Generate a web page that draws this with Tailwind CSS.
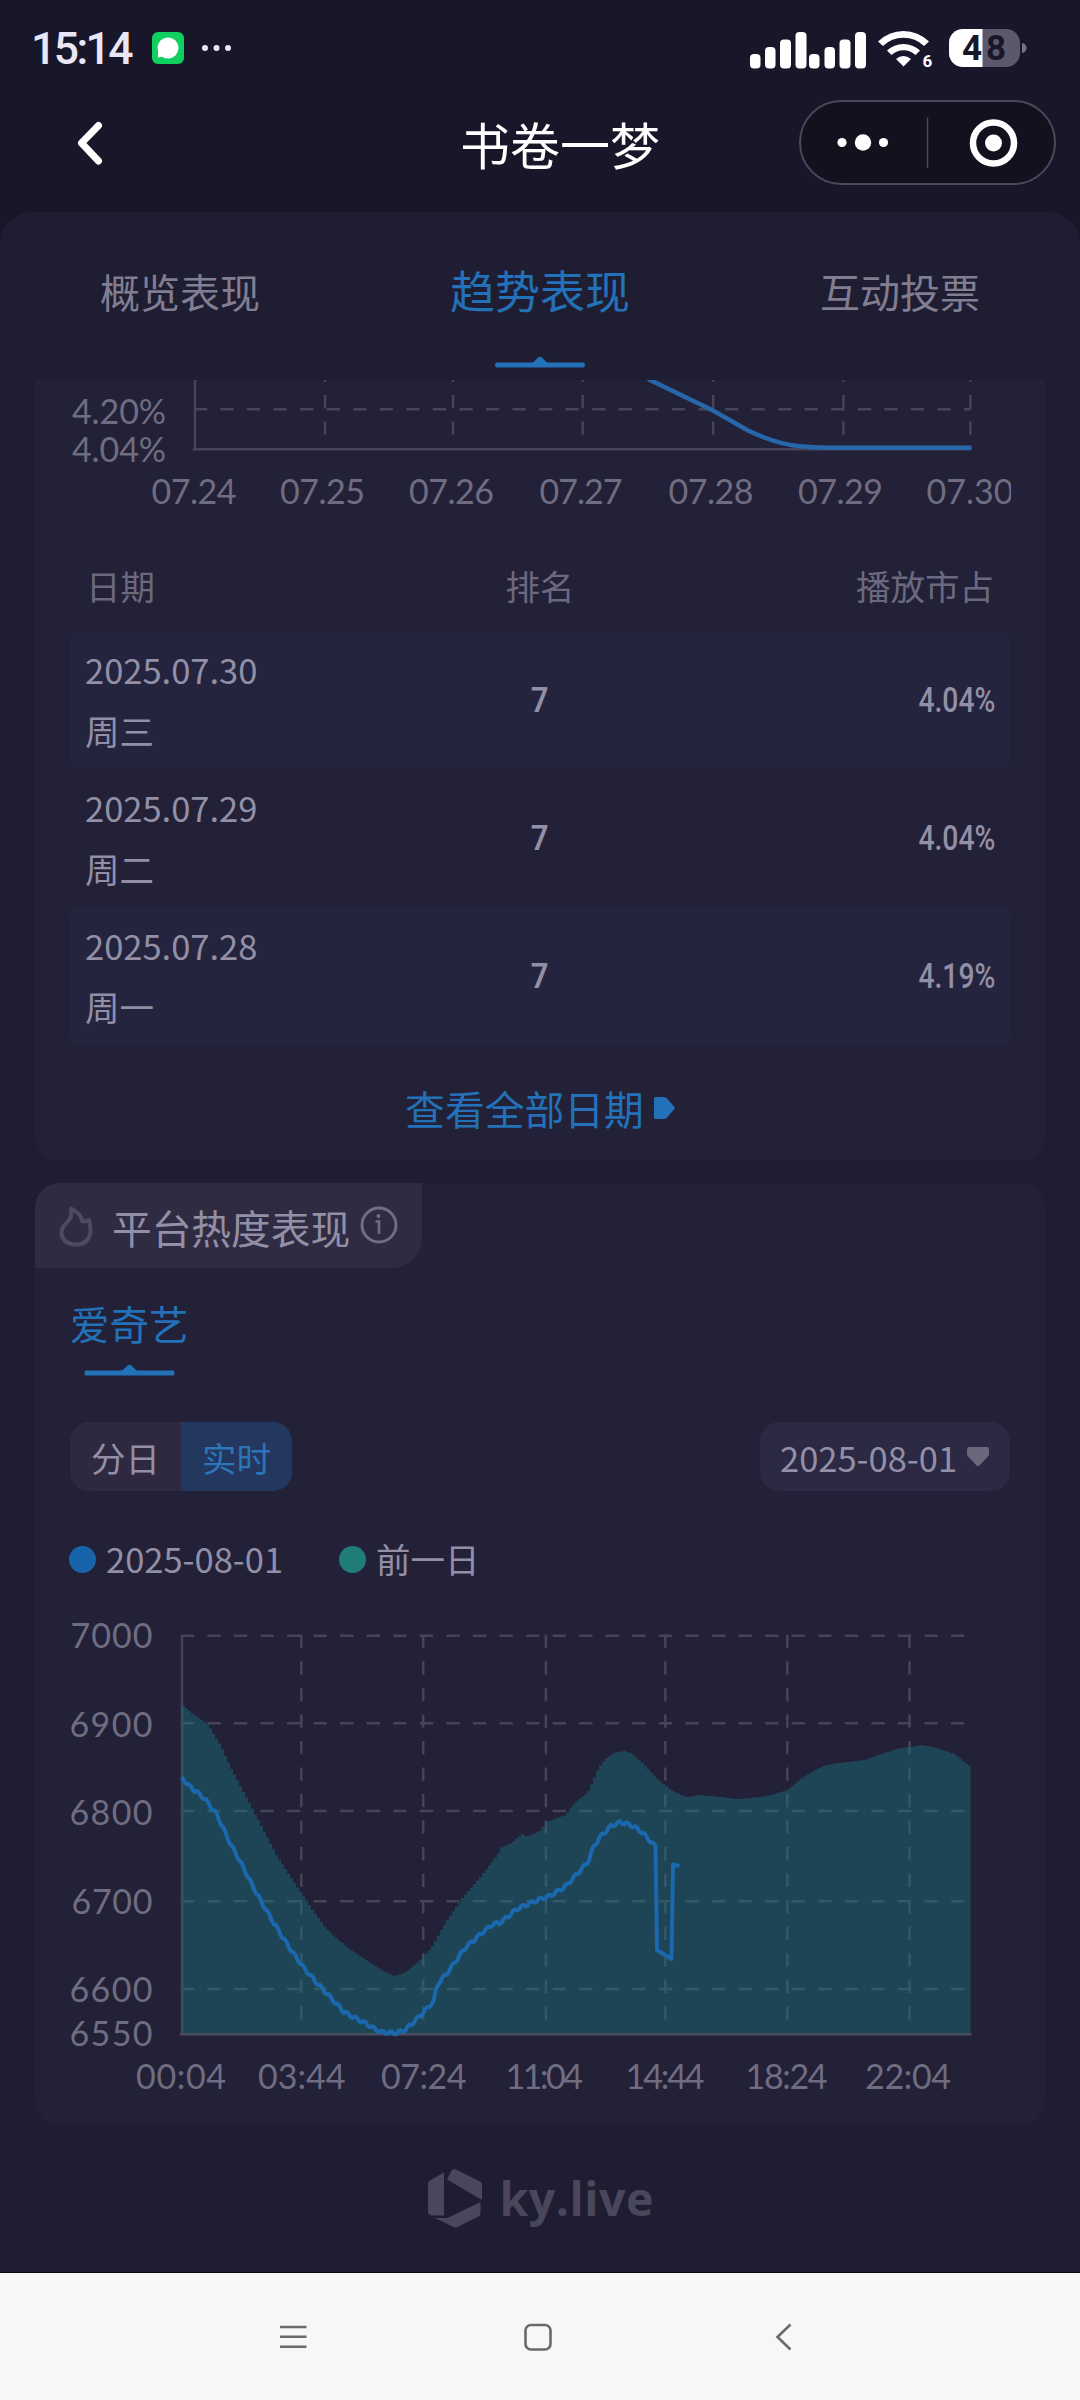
<!DOCTYPE html>
<html lang="zh-CN">

<head>
    <meta charset="UTF-8">
    <meta name="viewport" content="width=device-width, initial-scale=1.0">
    <title>书卷一梦</title>
    <script src="https://cdn.jsdelivr.net/npm/@tailwindcss/browser@4"></script>
</head>

<body class="w-[1080px] h-[2400px] overflow-hidden bg-[#181629] font-['Noto_Sans_CJK_SC',sans-serif] text-[#928fa6]">

    <!-- Status bar -->
    <div class="h-24 pl-[31px] pr-[52px] flex items-center text-[#e9e7f6]">
        <span class="w-[121px] font-['Roboto',sans-serif] font-medium text-[44.500px] leading-none tracking-[-2.6px] mt-0.5">15:14</span>
        <svg class="w-8 h-8" viewBox="0 0 32 32">
            <rect width="32" height="32" rx="6" fill="#10cf5e" />
            <circle cx="16" cy="16" r="10.5" fill="#fff" />
            <path d="M6 17v8.5l7-1z" fill="#fff" />
        </svg>
        <svg class="w-8 h-8 ml-[17px]" viewBox="0 0 32 32" fill="#e9e7f6">
            <circle cx="4" cy="16" r="3" />
            <circle cx="15.500" cy="16" r="3" />
            <circle cx="27" cy="16" r="3" />
        </svg>
        <!-- Signal, wifi, battery -->
        <svg class="w-[280px] h-12 ml-auto" viewBox="748 24 280 48" fill="#fff">
            <rect x="750" y="54" width="10.500" height="14.500" rx="4" />
            <rect x="765" y="47" width="10.500" height="21.500" rx="4" />
            <rect x="780" y="39.500" width="11" height="29" rx="4" />
            <rect x="795.500" y="32" width="11" height="36.500" rx="4" />
            <rect x="809" y="54" width="10.500" height="14.500" rx="4" />
            <rect x="824.500" y="47" width="10.500" height="21.500" rx="4" />
            <rect x="839.500" y="39.500" width="11" height="29" rx="4" />
            <rect x="855" y="32" width="11" height="36.500" rx="4" />
            <path d="M878 41.500a36 36 0 0 1 51 0l-5 4.500a29.500 29.500 0 0 0-41 0z" />
            <path d="M887 50.500a24 24 0 0 1 33 0l-4.500 4.500a17.500 17.500 0 0 0-24 0z" />
            <path d="M896 59q7.500-6 15 0l-7.500 7.500z" />
            <text x="922.500" y="66.500" font-size="17" font-weight="700" font-family="Roboto">6</text>
            <rect x="949" y="29" width="71" height="38" rx="14" fill="#5b586c" />
            <path d="M982.500 29v38H963a14 14 0 0 1-14-14V43a14 14 0 0 1 14-14z" />
            <path d="M1022 43q4.500 1 4.500 5t-4.500 5z" fill="#777488" />
            <text x="962" y="60" font-size="35" font-weight="700" font-family="Roboto" fill="#181629" textLength="44">48</text>
        </svg>
    </div>

    <!-- Title bar -->
    <div class="h-[116px] pl-[72px] pr-6 flex items-start text-white">
        <svg class="w-9 h-[94px]" viewBox="0 0 36 94" fill="none" stroke="#fff" stroke-width="7" stroke-linecap="round" stroke-linejoin="round">
            <path d="M26.500 29.500 9.500 47 26.500 65" />
        </svg>
        <h1 class="ml-[352px] mt-1 text-[50px] leading-[86px]">书卷一梦</h1>
        <div class="ml-auto mt-1 w-[257px] h-[85px] rounded-full border-2 border-[#4a485a] bg-[#12111e] flex items-center">
            <svg class="w-full h-[81px]" viewBox="801 102 253 81" fill="#fff">
                <circle cx="842" cy="142.500" r="4.600" />
                <circle cx="863" cy="142.500" r="8.200" />
                <circle cx="883.500" cy="142.500" r="4.600" />
                <path d="M927.500 117.500v50.500" stroke="#4a485a" stroke-width="1.500" />
                <circle cx="993.500" cy="143" r="20.500" fill="none" stroke="#fff" stroke-width="6.500" />
                <circle cx="993.500" cy="143" r="8.500" />
            </svg>
        </div>
    </div>

    <main class="h-[2061px] rounded-t-[32px] bg-[#1f1d31] border-b border-[#08070f] overflow-hidden">

        <!-- Tabs -->
        <nav class="h-[168px] grid grid-cols-3 text-center text-[40px] text-[#827e92]">
            <div class="pt-10 leading-[78px]">概览表现</div>
            <div class="pt-[39px] leading-[78px] text-[45px] text-[#2371b8]">
                趋势表现
                <svg class="mx-auto mt-[27px] w-[90px] h-3" viewBox="0 0 90 12" fill="#2371b8">
                    <path d="M1 6.500h35q2 0 3.500-1.500L43 1.500q2-1.500 4 0L50.500 5q1.500 1.500 3.500 1.500h35q2 2.500 0 5H1q-2-2.500 0-5z" />
                </svg>
            </div>
            <div class="pt-10 leading-[78px]">互动投票</div>
        </nav>

        <!-- Market share card -->
        <section class="mx-[35px] h-[781px] rounded-b-3xl bg-[#222137] px-[35px]">
            <svg class="w-[941px] h-[140px] overflow-hidden" viewBox="70 380 941 140" fill="none" font-family="Lato" font-size="34" font-weight="400">
                <g stroke="#474457" stroke-width="2.500">
                    <path d="M193.800 409.200H971" stroke-dasharray="13.280" />
                    <path d="M325 368.500V449M453 368.500V449M582.700 368.500V449M713.200 368.500V449M843.400 368.500V449M970.400 368.500V449" stroke-dasharray="13.250" />
                    <path d="M195 380V449M193 449.200H971" />
                </g>
                <path d="M648 379 713 410.500 748 430.500Q776 444 800 446.300 812 447.600 830 447.700H971.500" stroke="#2767a9" stroke-width="4.500" />
                <g fill="#706d82">
                    <text x="72" y="423.500" textLength="94">4.20%</text>
                    <text x="72" y="461.500" textLength="94">4.04%</text>
                    <text x="151.500" y="504.300" textLength="85">07.24</text>
                    <text x="280" y="504.300" textLength="85">07.25</text>
                    <text x="409" y="504.300" textLength="85">07.26</text>
                    <text x="539.500" y="504.300" textLength="83">07.27</text>
                    <text x="668.500" y="504.300" textLength="85">07.28</text>
                    <text x="798" y="504.300" textLength="85">07.29</text>
                    <text x="926.500" y="504.300" textLength="87">07.30</text>
                </g>
            </svg>

            <div class="h-28 px-4 pt-[29px] grid grid-cols-3 text-[34.500px] leading-[72px] text-[#6c697f]">
                <span>日期</span>
                <span class="text-center">排名</span>
                <span class="text-right">播放市占</span>
            </div>

            <div class="grid gap-0.5">
                <div class="h-[136px] rounded-lg bg-[#25243f] px-[15px] grid grid-cols-3 items-center text-[34.500px] leading-[61px]">
                    <div>2025.07.30<br>周三</div>
                    <div class="text-center font-['Roboto',sans-serif] font-semibold scale-x-90">7</div>
                    <div class="text-right font-['Roboto',sans-serif] font-medium origin-right scale-x-[0.82]">4.04%</div>
                </div>
                <div class="h-[136px] px-[15px] grid grid-cols-3 items-center text-[34.500px] leading-[61px]">
                    <div>2025.07.29<br>周二</div>
                    <div class="text-center font-['Roboto',sans-serif] font-semibold scale-x-90">7</div>
                    <div class="text-right font-['Roboto',sans-serif] font-medium origin-right scale-x-[0.82]">4.04%</div>
                </div>
                <div class="h-[136px] rounded-lg bg-[#25243f] px-[15px] grid grid-cols-3 items-center text-[34.500px] leading-[61px]">
                    <div>2025.07.28<br>周一</div>
                    <div class="text-center font-['Roboto',sans-serif] font-semibold scale-x-90">7</div>
                    <div class="text-right font-['Roboto',sans-serif] font-medium origin-right scale-x-[0.82]">4.19%</div>
                </div>
            </div>

            <div class="mt-6 flex items-center justify-center gap-2.5 text-[39.800px] leading-[80px] text-[#2371b8]">
                查看全部日期
                <svg class="w-[21px] h-[22px]" viewBox="0 0 21 22" fill="#2371b8">
                    <path d="M1.500 0h8q2 0 3.500 1.500l7 8q1.500 1.500 0 3l-7 8Q11.500 22 9.500 22h-8Q0 22 0 20.500v-19Q0 0 1.500 0z" />
                </svg>
            </div>
        </section>

        <!-- Platform heat card -->
        <section class="mx-[35px] mt-[22px] h-[942px] rounded-3xl bg-[#222137] overflow-hidden">
            <div class="w-[387px] h-[85px] rounded-tl-3xl rounded-br-[30px] bg-[#2f2b42] pl-[22px] flex items-center text-[39.700px]">
                <svg class="w-10 h-11" viewBox="57 1205 40 44" fill="none" stroke="#4e4a60" stroke-width="4" stroke-linejoin="round">
                    <path d="M71 1209.500q2 8-4 14-5.500 5-5.500 10.500 1 11 14.500 11.500 13.500-.5 14.500-13.500 0-6 -1.500-11-4 2.500-7 1-1-8-11-12.500z" />
                </svg>
                <span class="ml-[15px] mt-0.5 leading-[85px]">平台热度表现</span>
                <svg class="ml-[9px] -mt-0.5 w-10 h-10" viewBox="0 0 40 40" fill="none" stroke="#716e82" stroke-width="3">
                    <circle cx="20" cy="20" r="17" />
                    <path d="M16.500 16.500H20V29" stroke-width="2.500" />
                    <circle cx="19.500" cy="11" r="2" fill="#716e82" stroke="none" />
                </svg>
            </div>

            <div class="pl-[35px] pt-[18px] text-[39.500px] leading-[74px] text-[#2371b8]">
                爱奇艺
                <svg class="ml-3.5 mt-1 w-[91px] h-3" viewBox="0 0 90 12" fill="#2371b8">
                    <path d="M1 6.500h35q2 0 3.500-1.500L43 1.500q2-1.500 4 0L50.500 5q1.500 1.500 3.500 1.500h35q2 2.500 0 5H1q-2-2.500 0-5z" />
                </svg>
            </div>

            <div class="mt-[46px] px-[35px] flex justify-between text-[34.500px] leading-[70px]">
                <div class="flex rounded-[19px] overflow-hidden text-center">
                    <div class="w-[111px] h-[69px] bg-[#2e2941]">分日</div>
                    <div class="w-[111px] h-[69px] bg-[#24375f] text-[#2b75b8]">实时</div>
                </div>
                <div class="w-[250px] h-[69px] rounded-[19px] bg-[#2b2943] pl-5 flex items-center">
                    2025-08-01
                    <svg class="ml-2.5 w-[22px] h-5" viewBox="0 0 22 20" fill="#6b687d">
                        <path d="M2 0h18q2 0 2 2v5q0 1.500-1.500 3l-8 8.500q-1.500 1.500-3 0l-8-8.500Q0 8.500 0 7V2q0-2 2-2z" />
                    </svg>
                </div>
            </div>

            <div class="mt-[33px] pl-[34px] flex items-center text-[34.500px] leading-[68px]">
                <span class="mt-[3px] w-[27px] h-[27px] rounded-full bg-[#1864ab]"></span>
                <span class="ml-2.5 w-[233px]">2025-08-01</span>
                <span class="mt-[3px] w-[27px] h-[27px] rounded-full bg-[#1f7c79]"></span>
                <span class="ml-2.5">前一日</span>
            </div>

            <svg class="mt-px ml-[35px] w-[941px] h-[520px]" viewBox="70 1593 941 520" fill="none" font-family="Lato" font-size="34" font-weight="400">
                <g stroke="#474457" stroke-width="2.500">
                    <path d="M180.800 1635.700H966M180.800 1723.300H966M180.800 1811H966M180.800 1901.300H966M180.800 1989H966" stroke-dasharray="13.280" />
                    <path d="M301.300 1634.800V2032M423.200 1634.800V2032M545.900 1634.800V2032M665.300 1634.800V2032M787.300 1634.800V2032M909.500 1634.800V2032" stroke-dasharray="13.270" />
                    <path d="M182 1635V2034" />
                </g>
                <path id="prevArea" fill="#1b717c" fill-opacity="0.450" />
                <path d="M180 2034.200H971.500" stroke="#4a4e5e" stroke-width="2.500" />
                <path id="todayLine" stroke="#1b68ae" stroke-width="4" stroke-linejoin="round" />
                <g fill="#706d82">
                    <text x="70.500" y="1648.400" textLength="82">7000</text>
                    <text x="69.500" y="1736.700" textLength="83">6900</text>
                    <text x="69.500" y="1825" textLength="83">6800</text>
                    <text x="71.500" y="1913.500" textLength="81">6700</text>
                    <text x="69.500" y="2002" textLength="83">6600</text>
                    <text x="69.500" y="2046.300" textLength="83">6550</text>
                    <text x="136" y="2089" textLength="90">00:04</text>
                    <text x="258" y="2089" textLength="87.500">03:44</text>
                    <text x="381" y="2089" textLength="85.500">07:24</text>
                    <text x="505.500" y="2089" textLength="77.500">11:04</text>
                    <text x="625.500" y="2089" textLength="79">14:44</text>
                    <text x="745.500" y="2089" textLength="82">18:24</text>
                    <text x="865" y="2089" textLength="86">22:04</text>
                </g>
            </svg>
        </section>

        <!-- Brand -->
        <div class="pt-[43px] flex justify-center items-center text-[#4a475c]">
            <svg class="w-[56px] h-[60px]" viewBox="0 0 56 60" fill="#4a475c">
                <path d="M17 4.500V47.500H4L1 45V15.500q0-2 2-3z" />
                <path d="m20 11.500 4-8q2-3 5-2l24 12q2 1 2 3V32z" />
                <path d="M53.500 34v11q0 2-2 3.500L30.500 59q-2 1-4 0L8 50h12.500z" />
            </svg>
            <span class="ml-[17px] w-[154px] font-['Open_Sans',sans-serif] font-bold text-[46.500px] tracking-[0.5px] leading-[60px]">ky.live</span>
        </div>
    </main>

    <!-- System navigation -->
    <footer class="h-[127px] bg-[#f7f7f7]">
        <svg class="w-full h-[127px]" viewBox="0 2273 1080 127" fill="none" stroke="#6a6a6a" stroke-width="2.600">
            <path d="M280 2327h26.500M280 2336.700h26.500M280 2346.700h26.500" />
            <rect x="525.500" y="2325" width="25" height="24.500" rx="5.500" />
            <path d="M790.500 2324.500 777.500 2337l13 12.500" />
        </svg>
    </footer>

    <script>
        const prevPoints = [
            [182, 1706], [193, 1715], [207, 1725], [220, 1747], [227, 1763], [241, 1790], [258, 1822], [275, 1855],
            [293, 1883], [310, 1908], [324, 1928], [337, 1940], [351, 1951], [368, 1962], [382, 1971], [393, 1976],
            [403, 1973], [417, 1962], [430, 1948], [444, 1923], [461, 1898], [479, 1877], [496, 1855], [499, 1848],
            [510, 1843], [521, 1834], [525, 1837], [540, 1830], [545, 1822], [564, 1815], [574, 1802], [586, 1793],
            [592, 1780], [597, 1768], [605, 1758], [612, 1753], [623, 1751], [630, 1753], [643, 1765], [657, 1780],
            [671, 1791], [685, 1797], [698, 1795], [719, 1797], [736, 1799], [760, 1797], [774, 1794], [786, 1790],
            [802, 1777], [822, 1766], [836, 1763], [864, 1760], [877, 1755], [898, 1748], [910, 1747], [921, 1745],
            [936, 1748], [953, 1754], [970.500, 1768]
        ];

        const todayPoints = [
            [182, 1777], [188, 1785], [198, 1793], [205, 1799], [217, 1815], [224, 1830], [231, 1845], [241, 1863],
            [251, 1883], [262, 1903], [275, 1925], [289, 1947], [303, 1967], [317, 1983], [331, 1998], [344, 2012],
            [353, 2017], [365, 2023], [380, 2032], [396, 2033], [405, 2030], [418, 2018], [434, 2001], [437, 1985],
            [448, 1972], [465, 1948], [482, 1933], [493, 1924], [500, 1923], [517, 1909], [540, 1899], [550, 1896],
            [566, 1886], [578, 1873], [588, 1862], [593, 1848], [600, 1837], [611, 1826], [621, 1822], [633, 1826],
            [643, 1833], [650, 1841], [655, 1846]
        ];

        function valueAt(points, x) {
            let i = 1;
            while (i < points.length - 1 && points[i][0] < x) i++;
            const [x0, y0] = points[i - 1];
            const [x1, y1] = points[i];
            return y0 + (y1 - y0) * (x - x0) / (x1 - x0);
        }

        // area drawn as small steps, one per sample
        let area = 'M182 2034V1706';
        for (let x = 182; x < 970; x += 3) {
            area += `V${valueAt(prevPoints, x).toFixed(1)}H${Math.min(x + 3, 970.500).toFixed(1)}`;
        }
        document.getElementById('prevArea').setAttribute('d', area + 'V2034Z');

        let line = 'M182 1777';
        let n = 0;
        for (let x = 184; x < 655; x += 2.190) {
            const wobble = n++ % 4 < 2 ? 1.300 : -1.300;
            line += `L${x.toFixed(1)} ${(valueAt(todayPoints, x) + wobble).toFixed(1)}`;
        }
        line += 'L655.500 1846 657 1950 671.500 1959 673 1864.500 679.500 1866';
        document.getElementById('todayLine').setAttribute('d', line);
    </script>

</body>

</html>
